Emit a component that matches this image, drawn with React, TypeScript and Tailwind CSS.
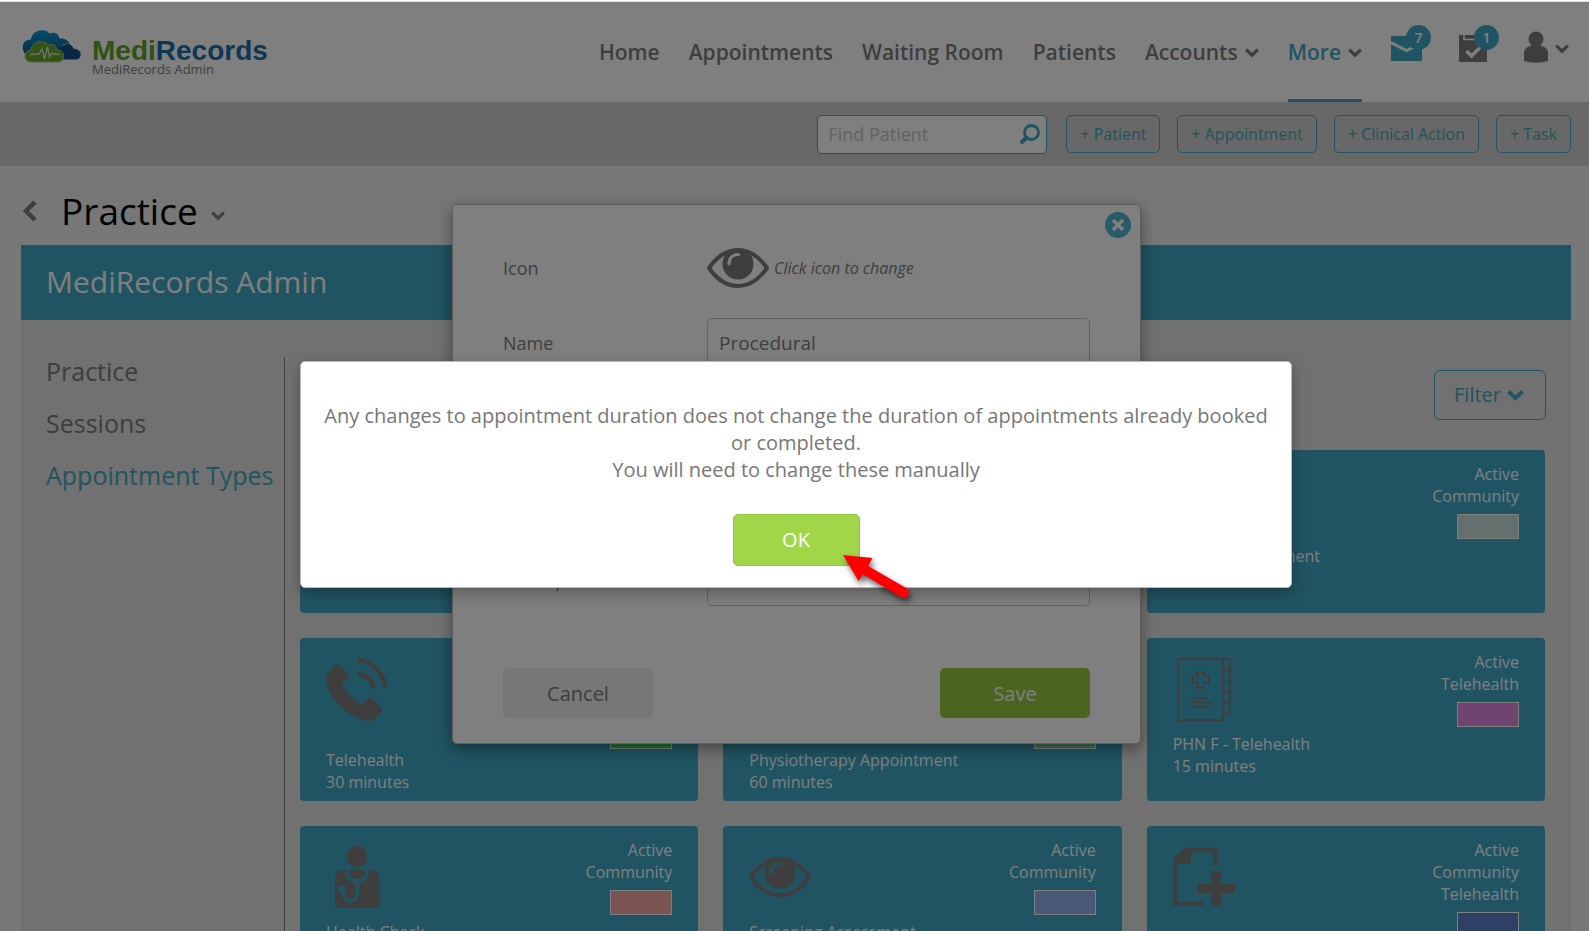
import React from "react";

type IconName = "eye" | "phone" | "book" | "doctor" | "file";

interface AppointmentType {
  name: string;
  duration: string;
  icon: IconName;
  tags: string[];
  swatch: string;
}

const appointmentTypes: AppointmentType[] = [
  { name: "Standard", duration: "15 minutes", icon: "doctor", tags: ["Active", "Community"], swatch: "bg-[#c8e0da]" },
  { name: "Procedural", duration: "30 minutes", icon: "eye", tags: ["Active", "Community"], swatch: "bg-[#c8e0da]" },
  { name: "Nurse Appointment", duration: "", icon: "file", tags: ["Active", "Community"], swatch: "bg-[#c8e0da]" },
  { name: "Telehealth", duration: "30 minutes", icon: "phone", tags: ["Active", "Community", "Telehealth"], swatch: "bg-[#38e454]" },
  { name: "Physiotherapy Appointment", duration: "60 minutes", icon: "doctor", tags: ["Active", "Community", "Telehealth"], swatch: "bg-[#76e0a6]" },
  { name: "PHN F - Telehealth", duration: "15 minutes", icon: "book", tags: ["Active", "Telehealth"], swatch: "bg-[#de88de]" },
  { name: "Health Check", duration: "30 minutes", icon: "doctor", tags: ["Active", "Community"], swatch: "bg-[#f4aaa6]" },
  { name: "Screening Assessment", duration: "30 minutes", icon: "eye", tags: ["Active", "Community"], swatch: "bg-[#96b0f0]" },
  { name: "New Referral", duration: "45 minutes", icon: "file", tags: ["Active", "Community", "Telehealth"], swatch: "bg-[#5c80c8]" },
];

const Chevron = ({ className = "" }: { className?: string }) => (
  <svg className={`shrink-0 ${className}`} width="14" height="10" viewBox="0 0 14 10" fill="none" stroke="currentColor" strokeWidth="3.2">
    <path d="M1.2 1.6L7 7.2L12.8 1.6" />
  </svg>
);

const EyeShapes = ({ shine }: { shine: string }) => (
  <>
    <path d="M2 31C11 18 20 13 31 13S51 18 60 31C51 44 42 49 31 49S11 44 2 31Z" fill="none" stroke="currentColor" strokeWidth="4" strokeLinejoin="round" />
    <circle cx="31" cy="27" r="15.5" fill="currentColor" />
    <path d="M22 27C22 21 26 17.5 31.5 17.5" fill="none" stroke={shine} strokeWidth="3.2" strokeLinecap="round" />
  </>
);

const TypeIcon = ({ name }: { name: IconName }) => (
  <svg className="mt-[7px] shrink-0 text-[#7c7c7c]" width="62" height="63" viewBox="0 0 62 63">
    {name === "eye" && <EyeShapes shine="#40a8c4" />}
    {name === "phone" && (
      <>
        <path
          d="M1.5 15.5L8 8.2Q10.5 5 13.5 7.5L21 15Q24 18 21.2 20.8L16 26C20 35 27 42 35 46.5L41 41.2Q44 38.5 47 41.2L55 49Q57.5 52 55 55L50 60Q46.5 63.5 41 62.8C20 58.5 3 41 0 22Q-0.4 18 1.5 15.5Z"
          fill="currentColor"
        />
        <path d="M31.5 15.5C40 16.5 46 22 47.6 30.6M32 2.3C46 3.5 57.5 14 59.7 29.5" fill="none" stroke="currentColor" strokeWidth="4.6" />
      </>
    )}
    {name === "book" && (
      <g fill="none" stroke="currentColor" strokeWidth="2">
        <path d="M5 1H50V62H5ZM50 1H57V55.5H50M50 11.7H57M50 22.5H57M50 33.5H57M50 44.5H57" />
        <path d="M24.2 14H31.2V18H35.7V25H31.2V30H24.2V25H19.7V18H24.2Z" />
        <path d="M21.5 40H34M17 44.4H38.5M17 48.7H38.5" />
      </g>
    )}
    {name === "doctor" && (
      <>
        <circle cx="31" cy="10.5" r="10.5" fill="currentColor" />
        <path d="M15 24H47Q53.5 26 53.5 33V58Q53.5 62 49.5 62H13Q9 62 9 58V33Q9 26 15 24Z" fill="currentColor" />
        <path d="M20.5 23C21 31 25 35 31 35S41 31 41.5 23M31.5 35V47C31.5 58 17 58 16.5 45" fill="none" stroke="#40a8c4" strokeWidth="4" />
        <circle cx="16" cy="43.5" r="4" fill="#40a8c4" />
      </>
    )}
    {name === "file" && (
      <g fill="currentColor">
        <path d="M0 13.3L12 1.7H44.5V19H40V6.2H18V18H4.5V55.5H31V60H0Z" />
        <path d="M38.2 25.3H48V38H62V47H48V60H38.2V47H24.5V38H38.2Z" />
      </g>
    )}
  </svg>
);

const Logo = () => (
  <a href="#" className="flex items-start pt-[28px]">
    <svg width="60" height="34" viewBox="0 0 60 34" aria-hidden="true">
      <defs>
        <linearGradient id="cloud" x1="0" y1="0" x2="0" y2="1">
          <stop offset="0" stopColor="#0a9ad6" />
          <stop offset="1" stopColor="#145a96" />
        </linearGradient>
      </defs>
      <path d="M36 29.5Q34 17 41 15.5Q48 11.5 51.5 18.5Q59 19.5 58.8 25Q58 29.5 53 29.5Z" fill="#10508a" />
      <path d="M3 24C-2 16 2 9.5 9 9.5C10-1 24-2 27.5 3.5C33 1 37.5 4.5 37.5 8.5C43 8 47 11 47.5 14Q42 12.5 39 16.5L36 24Z" fill="url(#cloud)" />
      <path d="M9 32C1 31.5 1.5 20 9 20C10 10 24 9.5 26.5 15.5C31 12.5 35 16 34.5 20C43.5 19.5 44 31.5 36 32Z" fill="#66a62a" stroke="#a8c890" />
      <path d="M8 24.5L17 24L20 19L22.5 29L25.5 17L27.5 27L29.5 23.5L38 24.5" fill="none" stroke="#dce8d4" strokeWidth="1.3" />
    </svg>
    <div className="pl-[10px]">
      <div className="pt-[7px] font-['Liberation_Sans',sans-serif] text-[28px] leading-[28px] font-bold">
        <span className="text-[#5fa62a]">Medi</span>
        <span className="text-[#1b6fa6]">Records</span>
      </div>
      <div className="text-[13px] leading-[8px]">MediRecords Admin</div>
    </div>
  </a>
);

const Badge = ({ count }: { count: number }) => (
  <span className="absolute -top-[10px] left-[15px] flex size-[25px] items-center justify-center rounded-full bg-[#40a8c4] text-[14px] font-semibold text-white">
    {count}
  </span>
);

const Header = () => (
  <header className="flex h-[100px] justify-between bg-white pr-[20px] pl-[22px]">
    <Logo />
    <nav className="flex items-stretch text-[21px] font-semibold">
      <div className="flex items-stretch gap-[29px]">
        <a href="#" className="flex items-center pt-[2px]">Home</a>
        <a href="#" className="flex items-center pt-[2px]">Appointments</a>
        <a href="#" className="flex items-center pt-[2px]">Waiting Room</a>
        <a href="#" className="flex items-center pt-[2px]">Patients</a>
        <a href="#" className="flex items-center gap-[7px] pt-[2px]">
          Accounts <Chevron />
        </a>
        <a href="#" className="flex items-center gap-[7px] border-b-[3px] border-[#40a8c4] pt-[5px] text-[#40a8c4]">
          More <Chevron className="text-[#7c7c7c]" />
        </a>
      </div>
      <div className="flex items-start gap-[37px] pt-[33px] pl-[29px]">
        <button type="button" aria-label="Messages" className="relative text-[#40a8c4]">
          <svg width="31" height="27" viewBox="0 0 31 27">
            <path d="M0 1H31V26H0Z" fill="currentColor" />
            <path d="M0 7.5L15.5 15.5L24 11.5" fill="none" stroke="#fff" strokeWidth="3" />
          </svg>
          <Badge count={7} />
        </button>
        <button type="button" aria-label="Tasks" className="relative">
          <svg width="28" height="28" viewBox="0 0 28 28">
            <path d="M0 0H28V27H0Z" fill="currentColor" />
            <path d="M5 0V4.5H24V0" fill="none" stroke="#fff" strokeWidth="1.5" />
            <path d="M7.5 16L12.5 21L21 12.5" fill="none" stroke="#fff" strokeWidth="3.5" />
          </svg>
          <Badge count={1} />
        </button>
        <button type="button" aria-label="Account" className="flex items-center gap-[7px]">
          <svg className="-mt-1" width="24" height="32" viewBox="0 0 24 32" fill="currentColor">
            <circle cx="12" cy="8" r="7.5" />
            <path d="M9 13H15C15 15 24 15 24 22V30Q12 33.5 0 30V22C0 15 9 15 9 13Z" />
          </svg>
          <Chevron />
        </button>
      </div>
    </nav>
  </header>
);

const Toolbar = () => {
  const actions = ["+ Patient", "+ Appointment", "+ Clinical Action", "+ Task"];

  return (
    <div className="flex h-16 items-center justify-end gap-[17px] bg-[#d0d0d0] pr-[18px]">
      <div className="mr-[2px] flex h-[39px] w-[230px] items-center rounded-[5px] border border-[#40a8c4] bg-white pr-[6px] pl-[10px]">
        <input
          type="text"
          aria-label="Find Patient"
          placeholder="Find Patient"
          className="w-full min-w-0 bg-transparent text-[18px] outline-none placeholder:text-[#c4c4c4]"
        />
        <button type="button" aria-label="Search" className="text-[#40a8c4]">
          <svg width="20" height="20" viewBox="0 0 20 20" fill="none" stroke="currentColor">
            <circle cx="11.5" cy="8.5" r="7" strokeWidth="2.8" />
            <path d="M6.5 13.5L2 18" strokeWidth="4" strokeLinecap="round" />
          </svg>
        </button>
      </div>
      {actions.map((action) => (
        <button key={action} type="button" className="h-[38px] rounded-[5px] border border-[#40a8c4] px-[13px] text-[16px] text-[#40a8c4]">
          {action}
        </button>
      ))}
    </div>
  );
};

const TypeCard = ({ item }: { item: AppointmentType }) => (
  <article className="h-[163px] overflow-hidden rounded-[4px] bg-[#40a8c4] px-[26px] pt-[13px] text-[16px] leading-[22px] text-white">
    <div className="flex min-h-[82px] items-start justify-between">
      <TypeIcon name={item.icon} />
      <div className="flex flex-col items-end">
        {item.tags.map((tag) => (
          <span key={tag}>{tag}</span>
        ))}
        <span className={`mt-[7px] h-[25px] w-[62px] border border-white ${item.swatch}`} />
      </div>
    </div>
    <p>{item.name}</p>
    <p>{item.duration}</p>
  </article>
);

const PracticePage = () => (
  <main className="pr-[18px] pl-[21px]">
    <div className="flex h-[79px] items-center pt-[4px]">
      <button type="button" aria-label="Back" className="pt-[6px] pl-[2px]">
        <svg width="14" height="22" viewBox="0 0 14 22" fill="none" stroke="currentColor" strokeWidth="4.5">
          <path d="M12 2L3 11L12 20" />
        </svg>
      </button>
      <h1 className="pt-[6px] pl-[24px] text-[37px] leading-[50px] text-black">Practice</h1>
      <Chevron className="mt-[16px] ml-[13px]" />
    </div>
    <section className="bg-[#e2e2e2]">
      <h2 className="flex h-[75px] items-center bg-[#40a8c4] pb-[2px] pl-[25px] text-[30px] text-white">MediRecords Admin</h2>
      <div className="flex">
        <aside className="mt-[37px] w-[264px] shrink-0 border-r border-[#7c7c7c] pl-[25px] text-[25px]">
          <nav className="-mt-3 flex flex-col leading-[52px] whitespace-nowrap">
            <a href="#">Practice</a>
            <a href="#">Sessions</a>
            <a href="#" className="text-[#40a8c4]">Appointment Types</a>
          </nav>
        </aside>
        <div className="flex-1 pt-[50px] pr-[25px] pb-[25px] pl-[15px]">
          <div className="flex justify-end">
            <button type="button" className="flex h-[50px] items-center gap-[6px] rounded-[6px] border border-[#40a8c4] pr-[21px] pl-[19px] text-[20px] text-[#40a8c4]">
              Filter
              <svg width="17" height="12" viewBox="0 0 17 12" fill="none" stroke="currentColor" strokeWidth="4">
                <path d="M1.5 2.5L8.5 9L15.5 2.5" />
              </svg>
            </button>
          </div>
          <div className="grid grid-cols-3 gap-[25px] pt-[30px] pr-px">
            {appointmentTypes.map((item) => (
              <TypeCard key={item.name} item={item} />
            ))}
          </div>
        </div>
      </div>
    </section>
  </main>
);

const EditTypeModal = () => (
  <div className="absolute inset-0 flex items-start justify-center pt-[202px] pl-[4px]">
    <form className="relative h-[540px] w-[689px] rounded-[5px] border border-[#bbb] bg-white px-[50px] pt-[32px] text-[18px] shadow-[0_5px_15px_rgba(0,0,0,0.4)]">
      <button type="button" aria-label="Close" className="absolute top-[7px] right-[9px] text-[#50b4d0]">
        <svg width="26" height="26" viewBox="0 0 26 26">
          <circle cx="13" cy="13" r="13" fill="currentColor" />
          <path d="M8 8L18 18M18 8L8 18" stroke="#fff" strokeWidth="3.5" />
        </svg>
      </button>
      <div className="flex h-[62px] items-center">
        <span className="w-[204px]">Icon</span>
        <button type="button" className="flex items-center gap-[5px] text-[16px] italic">
          <svg width="62" height="62" viewBox="0 0 62 62">
            <EyeShapes shine="#fff" />
          </svg>
          Click icon to change
        </button>
      </div>
      <div className="flex items-center pt-[19px]">
        <label htmlFor="type-name" className="w-[204px]">Name</label>
        <input id="type-name" type="text" defaultValue="Procedural" className="h-[50px] w-[383px] rounded-[5px] border border-[#c4c4c4] px-[11px] text-[19px]" />
      </div>
      <div className="flex items-end pt-[38px]">
        <label htmlFor="type-description" className="w-[204px] pb-[12px]">Description</label>
        <textarea id="type-description" className="h-[200px] w-[383px] resize-none rounded-[5px] border border-[#c4c4c4] px-[11px]" />
      </div>
      <div className="flex justify-between pt-[62px] text-[20px]">
        <button type="button" className="h-[50px] w-[150px] rounded-[5px] bg-[#eee] pt-px">Cancel</button>
        <button type="button" className="h-[50px] w-[150px] rounded-[5px] bg-[#96ca40] pt-px text-white">Save</button>
      </div>
    </form>
  </div>
);

const ConfirmDialog = () => (
  <div className="absolute inset-0 flex items-start justify-center bg-black/50 pt-[359px] pl-[3px]">
    <div role="alertdialog" aria-label="Appointment duration" className="flex h-[227px] w-[992px] flex-col items-center rounded-[5px] border border-[#bbb] bg-white px-[20px] pt-[40px] text-center text-[20px] leading-[27px] text-[#777] shadow-[0_5px_15px_rgba(0,0,0,0.3)]">
      <p>
        Any changes to appointment duration does not change the duration of appointments already booked or completed.
        <br />
        You will need to change these manually
      </p>
      <div className="relative mt-[31px]">
        <button type="button" className="h-[52px] w-[127px] rounded-[5px] border border-[#8fc83e] bg-[#a2d649] pb-[2px] text-white">OK</button>
        {/* pointer towards the button */}
        <svg className="absolute top-[36px] left-[105px] drop-shadow-[2px_4px_3px_rgba(0,0,0,0.6)]" width="80" height="56" viewBox="0 0 80 56">
          <path d="M5 5L34.5 8L30 16L69 38.5Q72 42 70 46Q67 49 63 47L25 24.5L20.5 31Z" fill="#f00" />
        </svg>
      </div>
    </div>
  </div>
);

const App = (): React.ReactNode => {
  return (
    <div className="h-screen overflow-hidden border-t border-white font-['Open_Sans',sans-serif] text-[#7c7c7c]">
      <div className="relative h-full overflow-hidden border-t border-[#dfe3e3] bg-[#eee]">
        <Header />
        <Toolbar />
        <PracticePage />
        <EditTypeModal />
        <ConfirmDialog />
      </div>
    </div>
  );
};

export default App;
